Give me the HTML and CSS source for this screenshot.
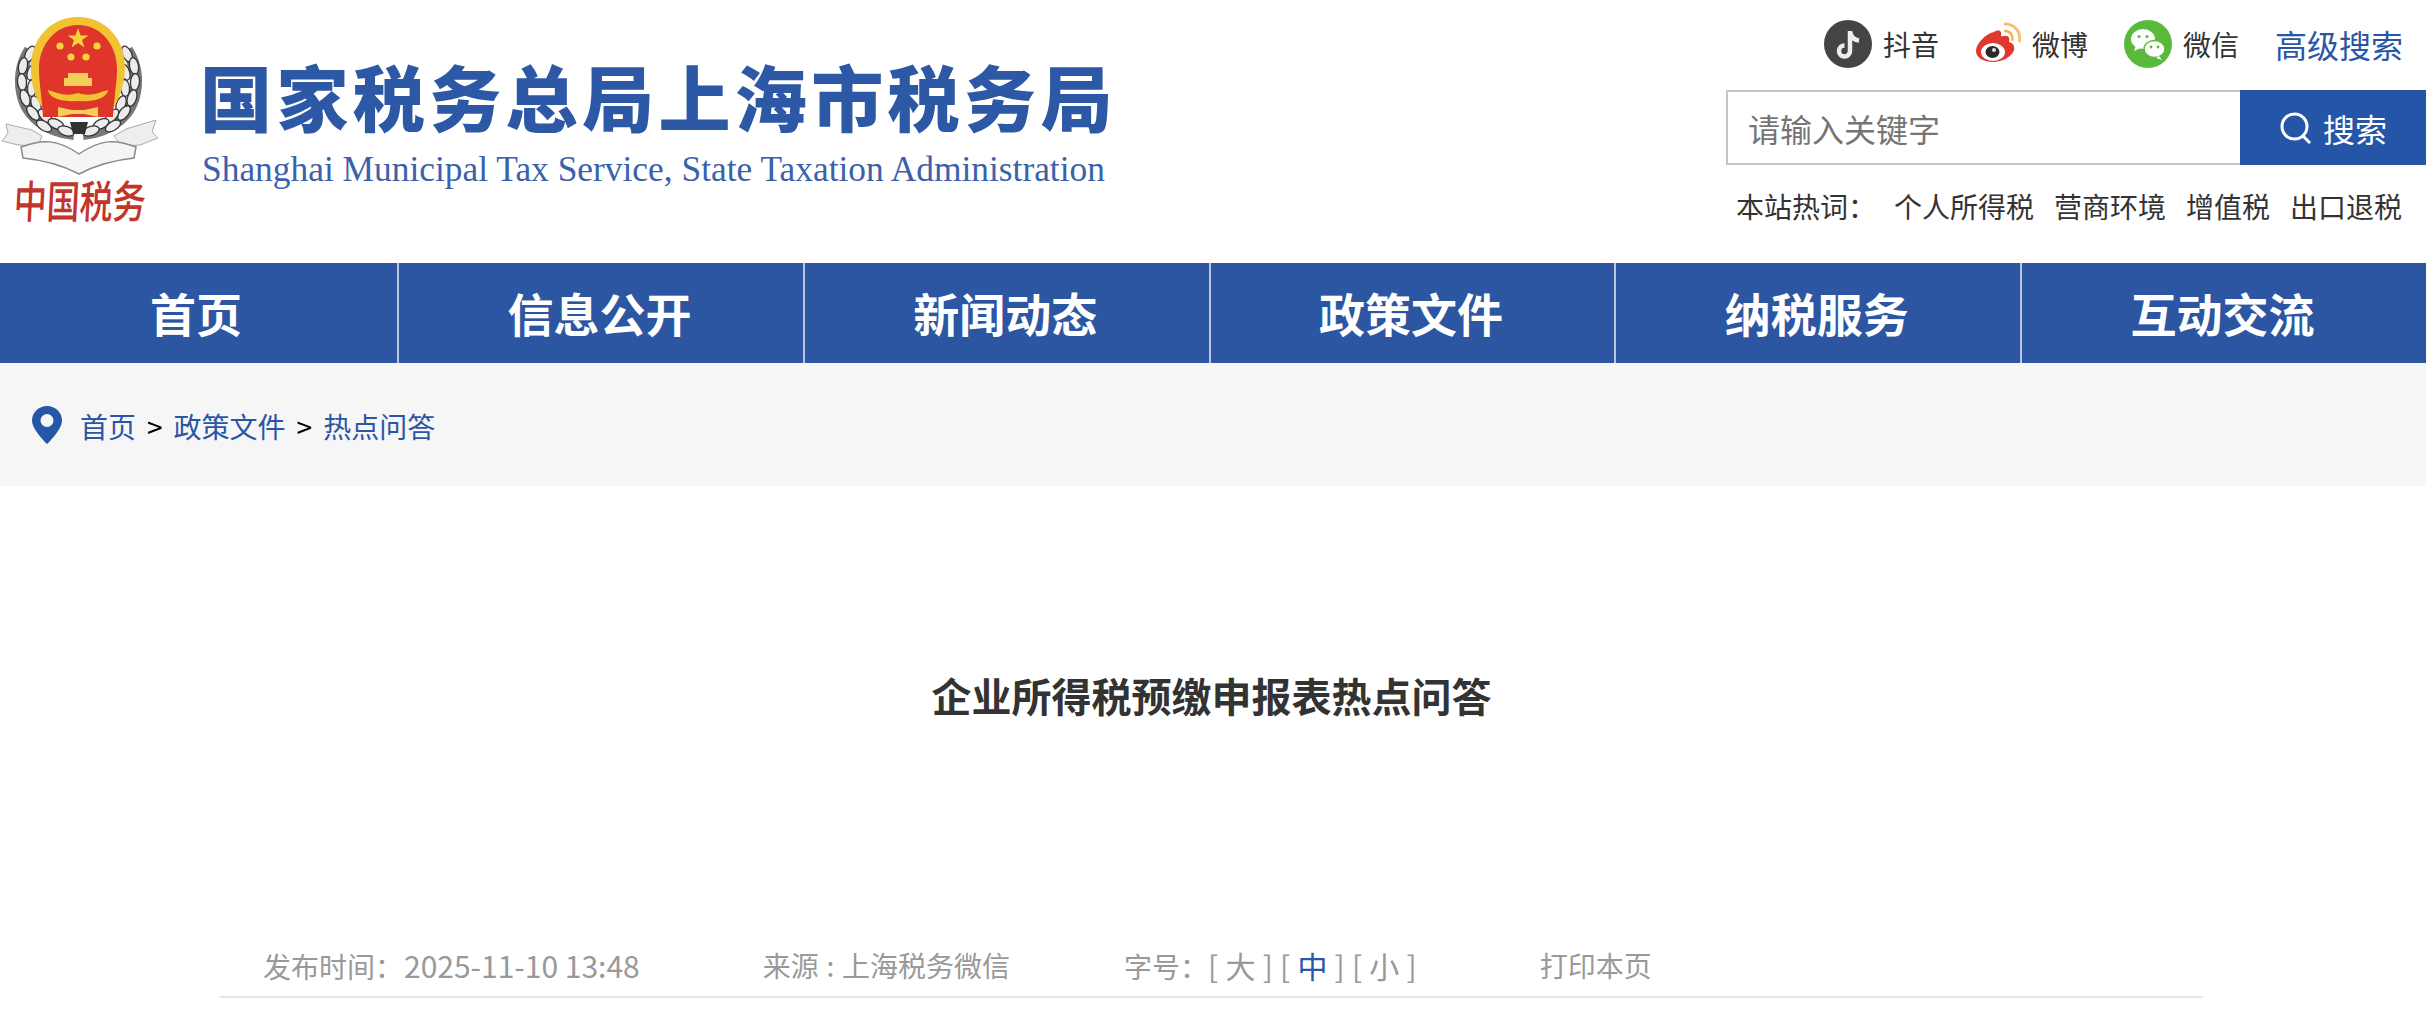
FILE: index.html
```html
<!DOCTYPE html>
<html lang="zh-CN">
<head>
    <meta charset="UTF-8">
    <title>企业所得税预缴申报表热点问答</title>
    <link rel="stylesheet" href="styles.css">
</head>
<body>
    <header class="header">
        <div class="brand">
            <svg class="emblem" viewBox="0 0 170 240" width="170" height="240">
                <defs>
                    <filter id="soft"><feGaussianBlur stdDeviation="0.55"/></filter>
                    <g id="leaf">
                        <ellipse cx="0" cy="0" rx="4.500" ry="8.500" fill="#ececec" stroke="#333" stroke-width="1.300"/>
                    </g>
                    <g id="wreath">
                        <path d="M30 50C16 72 18 104 38 120c10 8 24 13 36 14" fill="none" stroke="#777" stroke-width="12"/>
                        <use href="#leaf" transform="translate(30 54) rotate(25)"/>
                        <use href="#leaf" transform="translate(23 66) rotate(10)"/>
                        <use href="#leaf" transform="translate(32 72) rotate(20)"/>
                        <use href="#leaf" transform="translate(22 82) rotate(-5)"/>
                        <use href="#leaf" transform="translate(32 88) rotate(5)"/>
                        <use href="#leaf" transform="translate(25 98) rotate(-18)"/>
                        <use href="#leaf" transform="translate(36 104) rotate(-22)"/>
                        <use href="#leaf" transform="translate(33 113) rotate(-38)"/>
                        <use href="#leaf" transform="translate(45 116) rotate(-45)"/>
                        <use href="#leaf" transform="translate(44 126) rotate(-58)"/>
                        <use href="#leaf" transform="translate(56 124) rotate(-65)"/>
                        <use href="#leaf" transform="translate(66 131) rotate(-72)"/>
                    </g>
                </defs>
                <g filter="url(#soft)">
                    <use href="#wreath"/>
                    <use href="#wreath" transform="translate(157 0) scale(-1 1)"/>
                    <path d="M2 141l6-8-2-9 26 6 10 6-4 10-20-1z" fill="#eee" stroke="#aaa"/>
                    <path d="M158 138l-6-6 4-12-30 9-12 7 8 10 18-1z" fill="#eee" stroke="#aaa"/>
                    <path d="M21 147c22-8 36-8 58 7 22-15 36-15 57-7l-2 11c-19 2-38 7-55 16-17-9-36-14-56-16z" fill="#f5f5f5" stroke="#8a8a8a" stroke-width="1.500"/>
                    <path d="M70 122h18l-3 12h-12z" fill="#333"/>
                    <path d="M78 17c28 0 48 23 47 52-1 18-7 33-12 39H43c-6-6-12-21-12-39-1-29 19-52 47-52z" fill="#f1c232"/>
                    <path d="M78 25c23 0 39 20 39 44 0 14-3 28-4 48H43c-1-20-4-34-4-48 0-24 16-44 39-44z" fill="#e0342a"/>
                    <path d="M78 28l2.600 7.400h7.800l-6.300 4.700 2.300 7.500-6.400-4.500-6.400 4.500 2.300-7.500-6.300-4.700h7.800z" fill="#f7d23c"/>
                    <circle cx="60" cy="46" r="3.600" fill="#f7d23c"/>
                    <circle cx="97" cy="46" r="3.600" fill="#f7d23c"/>
                    <circle cx="71" cy="57" r="3.600" fill="#f7d23c"/>
                    <circle cx="86" cy="57" r="3.600" fill="#f7d23c"/>
                    <path d="M68 73h20v5h4v8H64v-8h4z" fill="#f4cd5a"/>
                    <path d="M48 90c10 3 18 7 30 3 12 4 20 0 30-3-1 9-16 12-30 11-14 1-29-2-30-11z" fill="#f1c232"/>
                    <path d="M58 107l14 3h12l14-3v10l-14-3H72l-14 3z" fill="#f4cd5a"/>
                </g>
                <text class="emblem-text" transform="translate(13 218) scale(1 1.350) skewX(-4)">中国税务</text>
            </svg>
            <div class="brand-name">
                <div class="brand-cn">国家税务总局上海市税务局</div>
                <div class="brand-en">Shanghai Municipal Tax Service, State Taxation Administration</div>
            </div>
        </div>
        <div class="tools">
            <div class="social">
                <a class="social-item">
                    <svg class="social-icon" viewBox="0 0 48 48" width="48" height="48">
                        <circle cx="24" cy="24" r="24" fill="#444"/>
                        <path d="M26 11v20a5.500 5.500 0 1 1-5.500-5.500" fill="none" stroke="#eee" stroke-width="4.500"/>
                        <path d="M26 12c1 5 4 8 9 8.500" fill="none" stroke="#eee" stroke-width="4.500"/>
                    </svg>
                    <span>抖音</span>
                </a>
                <a class="social-item">
                    <svg class="social-icon" viewBox="0 0 48 48" width="48" height="48">
                        <path d="M21 12c5-3 8-1 7 3-.3 1.500 1 1.500 3 1 5-1 6 3 5 6 4 1 6 4 5 8-2 7-12 12-21 12-9 0-17-4-17-11 0-7 9-17 18-19z" fill="#e0382f"/>
                        <ellipse cx="20" cy="32" rx="12" ry="9" fill="#fff"/>
                        <ellipse cx="19.500" cy="32" rx="7" ry="6" fill="#2b2b2b"/>
                        <circle cx="21" cy="30" r="2" fill="#ddd"/>
                        <path d="M32 11c5 0 8 4 7.500 9" fill="none" stroke="#f4b454" stroke-width="2.500" stroke-linecap="round"/>
                        <path d="M32 4c10 0 16 8 14.500 17" fill="none" stroke="#f6c274" stroke-width="3" stroke-linecap="round"/>
                    </svg>
                    <span>微博</span>
                </a>
                <a class="social-item">
                    <svg class="social-icon" viewBox="0 0 48 48" width="48" height="48">
                        <circle cx="24" cy="24" r="24" fill="#58b93a"/>
                        <ellipse cx="19" cy="19" rx="12" ry="10" fill="#fff"/>
                        <path d="M12 25l-2 6 7-3z" fill="#fff"/>
                        <circle cx="15" cy="16.500" r="1.600" fill="#58b93a"/>
                        <circle cx="23" cy="16.500" r="1.600" fill="#58b93a"/>
                        <ellipse cx="30.500" cy="29" rx="10.500" ry="8.500" stroke="#58b93a" stroke-width="1.500" fill="#fff"/>
                        <path d="M35 36l3 4-6-2z" fill="#fff"/>
                        <circle cx="27" cy="27" r="1.400" fill="#58b93a"/>
                        <circle cx="34" cy="27" r="1.400" fill="#58b93a"/>
                    </svg>
                    <span>微信</span>
                </a>
                <a class="advanced">高级搜索</a>
            </div>
            <form class="search">
                <input class="search-input" type="text" placeholder="请输入关键字">
                <button class="search-btn" type="button">
                    <svg viewBox="0 0 34 34" width="34" height="34">
                        <circle cx="15.500" cy="15.500" r="12.500" fill="none" stroke="#fff" stroke-width="3"/>
                        <path d="M24 25l7 7" stroke="#fff" stroke-width="3"/>
                    </svg>
                    <span>搜索</span>
                </button>
            </form>
            <div class="hot">
                <span class="hot-label">本站热词：</span>
                <a>个人所得税</a>
                <a>营商环境</a>
                <a>增值税</a>
                <a>出口退税</a>
            </div>
        </div>
    </header>

    <nav class="nav">
        <a>首页</a>
        <a>信息公开</a>
        <a>新闻动态</a>
        <a>政策文件</a>
        <a>纳税服务</a>
        <a>互动交流</a>
    </nav>

    <div class="crumb">
        <svg class="pin" viewBox="0 0 30 38" width="30" height="38">
            <path d="M15 0C6.700 0 0 6.500 0 14.500 0 24 15 38 15 38s15-14 15-23.500C30 6.500 23.300 0 15 0z" fill="#2557a7"/>
            <circle cx="15" cy="14.500" r="6.500" fill="#f6f6f6"/>
        </svg>
        <a>首页</a>
        <span class="sep">&gt;</span>
        <a>政策文件</a>
        <span class="sep">&gt;</span>
        <a>热点问答</a>
    </div>

    <main class="article">
        <h1 class="title">企业所得税预缴申报表热点问答</h1>
        <div class="meta">
            <span class="meta-date">发布时间：<span class="date-val">2025-11-10 13:48</span></span>
            <span class="meta-source">来源 : 上海税务微信</span>
            <span class="meta-size">字号：<span class="size-opts">[ 大 ] [ <b class="size-on">中</b> ] [ 小 ]</span></span>
            <span class="meta-print">打印本页</span>
        </div>
    </main>
</body>
</html>
```

FILE: styles.css
```css
body {
    margin: 0;
    background: #fff;
    font-family: "Noto Sans CJK SC", "Noto Sans", sans-serif;
    color: #333;
    overflow: hidden;
}
a {
    color: inherit;
    text-decoration: none;
}
.header {
    display: flex;
    justify-content: space-between;
    height: 263px;
}
.brand {
    display: flex;
}
.emblem {
    display: block;
}
.emblem-text {
    font-size: 33px;
    fill: #c2352b;
    font-weight: 500;
}
.brand-name {
    margin-left: 30px;
    padding-top: 47px;
}
.brand-cn {
    font-size: 72px;
    line-height: 96px;
    font-weight: 900;
    letter-spacing: 4.400px;
    color: #2c58a6;
    white-space: nowrap;
}
.brand-en {
    margin-top: 3px;
    margin-left: 2px;
    font-family: "Liberation Serif", serif;
    font-size: 35.400px;
    line-height: 46px;
    color: #3a62ab;
    white-space: nowrap;
}
.tools {
    width: 700px;
    display: flex;
    flex-direction: column;
    align-items: flex-end;
}
.social {
    display: flex;
    align-items: center;
    height: 48px;
    margin-top: 20px;
    padding-right: 23px;
    font-size: 28px;
}
.social-item {
    display: flex;
    align-items: center;
    margin-right: 36px;
}
.social-item:first-child {
    margin-right: 34px;
}
.social-item span {
    margin-left: 11px;
}
.social-icon {
    display: block;
}
.advanced {
    font-size: 32px;
    color: #2a56a5;
}
.search {
    display: flex;
    height: 75px;
    margin-top: 22px;
}
.search-input {
    width: 514px;
    box-sizing: border-box;
    padding: 0 0 0 20px;
    border: 2px solid #c4c4c4;
    border-right: none;
    border-radius: 0;
    outline: none;
    font-family: inherit;
    font-size: 32px;
    color: #333;
}
.search-input::placeholder {
    color: #757575;
}
.search-btn {
    width: 186px;
    display: flex;
    align-items: center;
    justify-content: center;
    gap: 10px;
    padding: 0;
    border: none;
    background: #2455a6;
    color: #fff;
    font-family: inherit;
    font-size: 32px;
}
.hot {
    display: flex;
    gap: 20px;
    margin-top: 20px;
    padding-right: 24px;
    font-size: 28px;
    line-height: 42px;
}
.hot-label {
    margin-right: -2px;
}
.nav {
    display: grid;
    grid-template-columns: 397px repeat(5, 1fr);
    height: 100px;
    background: #2c56a2;
}
.nav a {
    display: flex;
    align-items: center;
    justify-content: center;
    padding-bottom: 3px;
    padding-right: 3px;
    box-sizing: border-box;
    font-size: 46px;
    font-weight: 700;
    color: #fff;
    border-left: 2px solid #b9c6de;
}
.nav a:first-child {
    padding-right: 5px;
    border-left: none;
}
.crumb {
    display: flex;
    align-items: center;
    gap: 11px;
    height: 123px;
    box-sizing: border-box;
    padding-left: 32px;
    padding-top: 2px;
    background: #f6f6f6;
    font-size: 28px;
    color: #2a56a5;
}
.pin {
    margin-right: 7px;
    margin-top: -2px;
}
.sep {
    color: #000;
}
.article {
    width: 1983px;
    margin-left: 220px;
}
.title {
    margin: 0;
    padding-top: 179px;
    font-size: 40px;
    line-height: 60px;
    font-weight: 700;
    text-align: center;
    color: #333;
}
.meta {
    display: flex;
    align-items: center;
    height: 62px;
    margin-top: 207px;
    padding-left: 43px;
    padding-top: 2px;
    border-bottom: 2px solid #e5e5e5;
    font-size: 28px;
    color: #999;
    white-space: nowrap;
}
.date-val {
    margin-left: 1px;
    font-size: 30px;
}
.meta-source {
    margin-left: 123px;
    word-spacing: 1.500px;
}
.meta-size {
    margin-left: 114px;
}
.size-opts {
    font-size: 30px;
    word-spacing: 0.500px;
}
.size-on {
    font-weight: 400;
    color: #2a56a5;
}
.meta-print {
    margin-left: 123px;
}
```
